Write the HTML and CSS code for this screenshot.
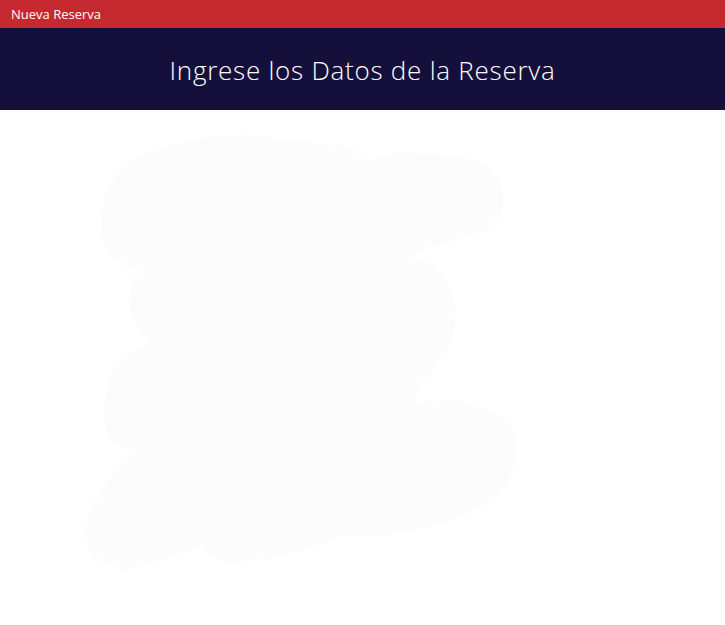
FILE: index.html
```html
<!DOCTYPE html>
<html lang="es">
<head>
<meta charset="utf-8">
<title>Nueva Reserva</title>
<link rel="stylesheet" href="styles.css">
</head>
<body>
<div class="topbar">Nueva Reserva</div>
<header class="hero"><h1 class="hero-title">Ingrese los Datos de la Reserva</h1></header>
<main class="content">
<svg class="blob" width="725" height="515" viewBox="0 110 725 515" aria-hidden="true">
<path d="M133 163 Q180 140 243 137 Q262 138 280 143 Q330 145 353 152 Q365 165 373 163 Q395 154 413 157 Q440 156 463 160 Q495 168 500 193 Q502 215 490 223 Q470 236 447 240 Q420 246 410 252 Q405 258 413 260 Q433 264 440 277 Q452 295 453 313 Q452 335 440 353 Q428 373 413 390 Q410 403 417 407 Q430 404 447 402 Q480 408 500 420 Q515 432 513 453 Q510 475 500 487 Q480 507 453 517 Q410 530 373 533 Q355 535 343 533 Q320 540 293 550 Q260 558 230 560 Q210 557 203 543 Q180 550 160 557 Q140 567 123 567 Q100 562 93 550 Q86 535 90 520 Q98 497 113 480 Q128 463 143 450 Q125 447 113 437 Q105 425 107 410 Q110 385 117 370 Q135 352 153 342 Q140 325 133 310 Q130 285 143 270 Q120 262 107 247 Q100 222 107 200 Q115 178 133 163 Z" />
</svg>
</main>
</body>
</html>
```
FILE: styles.css
```css
html, body {
  margin: 0;
  padding: 0;
  background: #ffffff;
}
body {
  font-family: "Open Sans", "Lato", sans-serif;
  width: 725px;
  height: 625px;
  overflow: hidden;
}
.topbar {
  height: 28px;
  background: #c5282f;
  color: #ffffff;
  font-size: 13px;
  line-height: 28px;
  padding-left: 11px;
  box-sizing: border-box;
}
.hero {
  height: 82px;
  background: #150f3b;
  display: flex;
  align-items: center;
  justify-content: center;
}
.hero-title {
  margin: 0;
  color: #ffffff;
  font-weight: 300;
  font-size: 26px;
  letter-spacing: 0.75px;
  position: relative;
  top: 1px;
}
.content {
  height: 515px;
}
.blob {
  display: block;
}
.blob path {
  fill: #fcfcfc;
  stroke: #fcfcfc;
  stroke-width: 6;
  stroke-linejoin: round;
}
```
